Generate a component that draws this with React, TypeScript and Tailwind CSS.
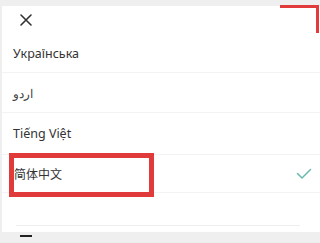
import React from "react";

export default function App() {
  const font = { fontFamily: '"Noto Sans", "Noto Sans CJK SC", sans-serif' };
  return (
    <div className="relative w-[320px] h-[243px] overflow-hidden bg-[#efefef]" style={font}>
      <div className="h-[6px]" />
      <div className="ml-[2px] bg-white flex flex-col">
        <div className="h-[27px] flex items-center pl-[17px]">
          <svg width="14" height="14" viewBox="0 0 14 14" fill="none" stroke="#333" strokeWidth="1.6" strokeLinecap="round">
            <path d="M2 2 L12 12 M12 2 L2 12" />
          </svg>
        </div>
        <div className="h-[40px] flex items-center pl-[11px] pt-[4px] border-b border-[#f3f3f3] text-[12.5px] text-[#333]">
          Українська
        </div>
        <div className="h-[40px] flex items-center pl-[11px] pt-[2px] border-b border-[#f3f3f3] text-[12px] text-[#444]">
          اردو
        </div>
        <div className="h-[42px] flex items-center pl-[11px] pt-[1px] border-b border-[#f3f3f3] text-[12.5px] text-[#333]">
          Tiếng Việt
        </div>
        <div className="h-[38px] flex items-center justify-between pl-[12px] pr-[8px] border-b border-[#f3f3f3] text-[12px] text-[#333]">
          <span className="pt-[2px]">简体中文</span>
          <svg width="16" height="12" viewBox="0 0 16 12" fill="none" stroke="#6ab9ad" strokeWidth="1.5" strokeLinecap="round" strokeLinejoin="round">
            <path d="M1.5 5.5 L6 10 L14.5 1.5" />
          </svg>
        </div>
        <div className="h-[33px] flex flex-col justify-end px-[14px]">
          <div className="h-px bg-[#eeeeee] mr-[6px]" />
        </div>
        <div className="h-[6px]" />
      </div>
      <div className="relative h-[11px]">
        <div className="absolute left-[20px] top-[3px] w-[12px] h-[2px] bg-[#222]" />
      </div>
      <div className="absolute left-[280px] top-[5px] w-[39px] h-[3px] bg-[#e23b3b]" />
      <div className="absolute left-[316px] top-[5px] w-[3px] h-[28px] bg-[#e23b3b]" />
      <div className="absolute left-[9px] top-[153px] w-[145px] h-[44px] border-[5px] border-[#e03a3a]" />
    </div>
  );
}
